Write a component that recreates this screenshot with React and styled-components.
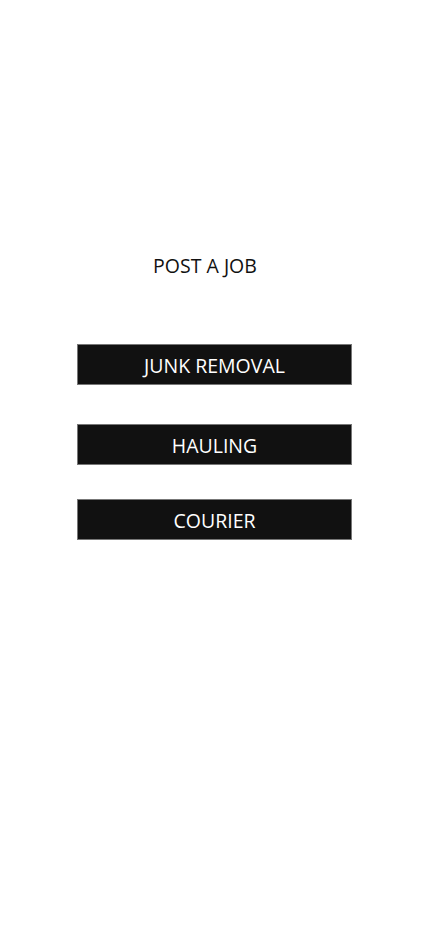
import React from "react";
import styled, { createGlobalStyle } from "styled-components";

const GlobalStyle = createGlobalStyle`
  body {
    margin: 0;
    background: #fff;
    font-family: "Open Sans", "Noto Sans", sans-serif;
  }
`;

const Page = styled.div`
  width: 428px;
  min-height: 926px;
  display: flex;
  flex-direction: column;
  align-items: center;
  padding-top: 252px;
  box-sizing: border-box;
`;

const Title = styled.h1`
  margin: 0 0 0 -18px;
  font-size: 19.5px;
  font-weight: 400;
  line-height: 28px;
  color: #111;
`;

const Menu = styled.div`
  display: flex;
  flex-direction: column;
  margin-top: 64px;
  margin-left: 1px;
`;

const Button = styled.button`
  width: 275px;
  height: 41px;
  margin-top: ${(p) => p.gap || 0}px;
  padding: 2px 0 0;
  background: #111;
  color: #fff;
  border: 1px solid #777;
  font-family: "Open Sans", "Noto Sans", sans-serif;
  font-size: 19.5px;
  cursor: pointer;
`;

const App = () => {
  return (
    <Page>
      <GlobalStyle />
      <Title>POST A JOB</Title>
      <Menu>
        <Button>JUNK REMOVAL</Button>
        <Button gap={39}>HAULING</Button>
        <Button gap={34}>COURIER</Button>
      </Menu>
    </Page>
  );
};

export default App;
